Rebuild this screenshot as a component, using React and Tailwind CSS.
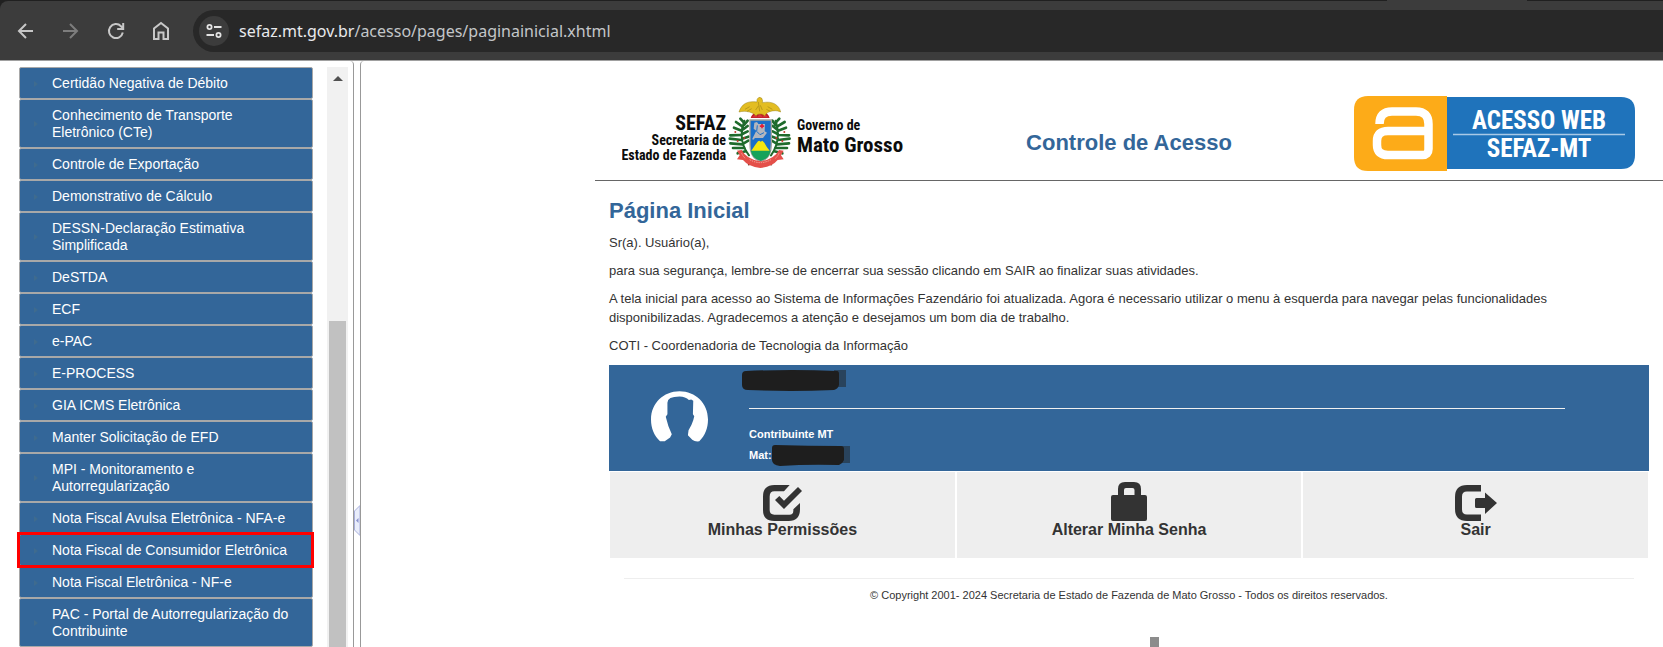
const MENU = [
  'Certidão Negativa de Débito',
  'Conhecimento de Transporte Eletrônico (CTe)',
  'Controle de Exportação',
  'Demonstrativo de Cálculo',
  'DESSN-Declaração Estimativa Simplificada',
  'DeSTDA',
  'ECF',
  'e-PAC',
  'E-PROCESS',
  'GIA ICMS Eletrônica',
  'Manter Solicitação de EFD',
  'MPI - Monitoramento e Autorregularização',
  'Nota Fiscal Avulsa Eletrônica - NFA-e',
  'Nota Fiscal de Consumidor Eletrônica',
  'Nota Fiscal Eletrônica - NF-e',
  'PAC - Portal de Autorregularização do Contribuinte',
]
const HIGHLIGHTED = 'Nota Fiscal de Consumidor Eletrônica'

function BrowserBar() {
  return (
    <header className="shrink-0 bg-[#202020]">
      <div className="flex h-px justify-end">
        <div className="mr-[136px] w-[140px] bg-[#3c3c3c]" />
      </div>
      <div className="flex h-[60px] items-center overflow-hidden rounded-tl-lg border-b border-[#a0a0a0] bg-[#3c3c3c] pl-4">
        <nav className="flex items-center gap-[25px] text-[#c7c7c7]">
          <button type="button" aria-label="Voltar">
            <svg className="size-5" viewBox="0 0 20 20" fill="none" stroke="currentColor" strokeWidth="2">
              <path d="M17 10H3.500M10 3L3 10l7 7" />
            </svg>
          </button>
          <button type="button" aria-label="Avançar" className="text-[#7d7d7d]">
            <svg className="size-5" viewBox="0 0 20 20" fill="none" stroke="currentColor" strokeWidth="2">
              <path d="M2 10h13.500M9 3l7 7-7 7" />
            </svg>
          </button>
          <button type="button" aria-label="Recarregar">
            <svg className="size-5" viewBox="0 0 20 20" fill="none" stroke="currentColor" strokeWidth="2">
              <path d="M16.800 11.500A7 7 0 1 1 15 5.200L17 7.200M17.200 2v6h-6" />
            </svg>
          </button>
          <button type="button" aria-label="Página inicial">
            <svg className="size-5" viewBox="0 0 20 20" fill="none" stroke="currentColor" strokeWidth="2">
              <path d="M3 18V7.500L10 2l7 5.500V18h-4.500v-6.500h-5V18z" />
            </svg>
          </button>
        </nav>
        <div className="ml-[22px] flex h-[42px] grow items-center rounded-l-full bg-[#282828] pl-[6px]">
          <button type="button" aria-label="Informações do site" className="grid size-[30px] place-items-center rounded-full bg-[#3c3c3c]">
            <svg className="size-4" viewBox="0 0 16 16" fill="none" stroke="#e3e3e3" strokeWidth="1.800">
              <circle cx="3.500" cy="4" r="2.100" />
              <circle cx="12.500" cy="12" r="2.100" />
              <path d="M8 4h7.500M.5 12H8" />
            </svg>
          </button>
          <p className="ml-[10px] font-['Noto_Sans',sans-serif] text-base leading-6 text-[#c3c6c8]">
            <span className="text-[#e8eaed]">sefaz.mt.gov.br</span>/acesso/pages/paginainicial.xhtml
          </p>
        </div>
      </div>
    </header>
  )
}

function Sidebar() {
  return (
    <aside className="flex w-[354px] shrink-0 justify-between overflow-hidden rounded-tr border-r border-[#999] pt-[6px] pr-[5px] pl-[19px]">
      <ul className="w-[294px]">
        {MENU.map((label) => (
          <li key={label} className="relative">
            <a
              href="#"
              className="flex items-center rounded-[2px] border border-[#a8a8a8] bg-[#336699] pt-[7px] pr-5 pb-[6px] pl-[14px] text-sm leading-[17px] text-white"
            >
              <span className="mr-[14px] h-0 w-0 shrink-0 border-y-[3px] border-l-4 border-y-transparent border-l-[#3f6b8f]" />
              {label}
            </a>
            {label === HIGHLIGHTED && (
              <span className="pointer-events-none absolute -inset-y-[2px] -right-px -left-[2px] z-10 border-[3px] border-[#ff0000]" />
            )}
          </li>
        ))}
      </ul>
      <div className="flex w-[21px] flex-col items-center bg-[#f1f1f1]">
        <span className="mt-[9px] h-0 w-0 shrink-0 border-x-[5px] border-b-[5px] border-x-transparent border-b-[#505050]" />
        <span className="mt-[240px] w-[17px] grow bg-[#c1c1c1]" />
      </div>
    </aside>
  )
}

function Splitter() {
  return (
    <div className="w-[6px] shrink-0 pt-[444px]">
      <button type="button" aria-label="Recolher menu" className="block">
        <svg className="h-[31px] w-[6px]" viewBox="0 0 6 31">
          <path d="M6 .5L.5 6v19L6 30.500z" fill="#e9edfb" stroke="#a9b0dc" />
          <path d="M4.500 13v5L2 15.500z" fill="#8b93cf" />
        </svg>
      </button>
    </div>
  )
}

function GovernmentLogo() {
  return (
    <svg className="h-[81px] w-[282px]" viewBox="622 90 282 81" role="img" aria-label="SEFAZ - Governo de Mato Grosso">
      <g className="font-['Roboto_Condensed',sans-serif] font-bold" fill="#0c0c0c">
        <text x="726" y="130" textAnchor="end" fontSize="20">SEFAZ</text>
        <text x="726" y="145" textAnchor="end" fontSize="14">Secretaria de</text>
        <text x="726" y="160" textAnchor="end" fontSize="14">Estado de Fazenda</text>
        <text x="797" y="130" fontSize="14">Governo de</text>
        <text x="797" y="152" fontSize="21">Mato Grosso</text>
      </g>
      <g transform="translate(725 90) scale(.3333)">
        <g fill="none" stroke="#1f6b2c" strokeWidth="8" strokeLinecap="round">
          <path d="M58 92C44 130 48 165 72 196M152 92c12 38 8 73-14 104" strokeWidth="6" />
          <path d="M57 98L46 86M53 110L33 96M50 122L27 113M48 135L16 136M49 150L14 146M52 163L16 160M57 174L24 174M62 184L38 190M58 104L68 92M54 118L68 108M52 132L68 124M52 146L70 140M56 160L70 152" />
          <path d="M152 98L163 86M156 110L179 96M159 122L183 113M161 135L192 136M160 150L194 146M157 163L192 160M152 174L186 174M148 184L172 190M151 104L142 92M156 118L143 108M158 132L143 124M158 146L142 140M154 160L140 152" />
        </g>
        <g fill="#c03a2c">
          <circle cx="31" cy="126" r="3" /><circle cx="38" cy="153" r="3" /><circle cx="58" cy="144" r="3" />
          <circle cx="178" cy="126" r="3" /><circle cx="172" cy="153" r="3" /><circle cx="154" cy="144" r="3" />
        </g>
        <path d="M77 84Q80 72 92 68l6-6 8 4 8-4 6 6q10 2 14 16z" fill="#c21f27" />
        <path d="M82 82l8-9 7 8 8-10 8 10 8-8 8 9z" fill="#e0454a" opacity=".6" />
        <path d="M42 66C50 42 66 32 96 36Q94 26 102 22q10 0 10 8 2 4 0 8c30-6 50 6 55 28-12-6-22-4-30-2-8 2-14 6-18 14-6-8-22-8-26 0-6-10-30-18-51-12z" fill="#e3bd22" stroke="#9a8114" strokeWidth="1.500" />
        <path d="M60 58l14-8M66 64l14-8M92 60l8-12M112 60l-6-14M128 50l14 8M124 58l12 6M100 36l4 28" stroke="#a48a18" strokeWidth="2" fill="none" />
        <path d="M75 90h64v72q0 44-32 52-32-8-32-52z" fill="#1b6fc9" stroke="#a8a69b" strokeWidth="4" />
        <path d="M77 181h60q-4 26-30 31-26-5-30-31z" fill="#16a25a" />
        <path d="M79 182q12-18 20-28l4-2 4 3 5-3 6 6q6 12 16 24z" fill="#f4e60e" />
        <path d="M88 98l8-2 4 6h20l-1 22 7 4-12 16H90l-6 6-2-4 12-24-8-6z" fill="#b3b6bd" />
        <path d="M97 106l-2 18 10 10 12-6" fill="none" stroke="#1b6fc9" strokeWidth="3" />
        <path d="M111 102v13M104.500 108.500h13" stroke="#e31d38" strokeWidth="5" />
        <path d="M56 204L78 222M70 226l9-12M140 226l-9-12" stroke="#6b2a1c" strokeWidth="5" />
        <path d="M36 182l14-2q14 28 56 34 42-6 56-34l14 2-8 14 8 12-18 2q-16 20-52 24-36-4-52-24l-18-2 8-12z" fill="#e4504a" />
        <path d="M74 209q32 18 64 0M50 190q4 10 12 16M162 190q-4 10-12 16" fill="none" stroke="#f6a9a0" strokeWidth="3" strokeDasharray="4 3" />
      </g>
    </svg>
  )
}

function AccessLogo() {
  return (
    <svg className="h-[75px] w-[281px]" viewBox="0 0 281 75" role="img" aria-label="Acesso Web SEFAZ-MT">
      <path d="M93 1h174q14 0 14 14v44q0 14-14 14H93z" fill="#1f73bb" />
      <path d="M14 0h79v75H14Q0 75 0 61V14Q0 0 14 0z" fill="#fdab18" />
      <path d="M25.500 28Q25.500 15.500 38 15.500h24q12.500 0 12.500 12.500v25q0 6-6 6H34q-11 0-11-10v-4q0-10 11-10h40" fill="none" stroke="#fff" strokeWidth="8.500" />
      <path d="M99 38.500h172" stroke="#a9c9e6" strokeWidth="1.500" />
      <g className="font-['Roboto_Condensed',sans-serif] font-bold" fill="#fff" textAnchor="middle" fontSize="25">
        <text x="185" y="33">ACESSO WEB</text>
        <text x="185" y="61">SEFAZ-MT</text>
      </g>
    </svg>
  )
}

function Avatar() {
  return (
    <svg className="h-[51px] w-[57px] shrink-0" viewBox="155 123 170 152" aria-hidden="true">
      <path
        d="M182 273C164 256 155 234 155 208C155 160 192 124 240 124s85 36 85 84c0 26-9 48-26 65Q286 275 278 268L265 255L267 240Q276 226 281 210L284 198L280 192L281 152L275 148L268 150Q258 139 240 139Q204 139 204 158V192L199 200L203 214Q206 228 212 240L217 252L212 262L196 273z"
        fill="#fff"
      />
    </svg>
  )
}

function CheckIcon() {
  return (
    <svg className="h-9 w-[39px]" viewBox="486 405 117 108" fill="currentColor" aria-hidden="true">
      <path d="M566 405H520Q486 405 486 440V480Q486 513 520 513H563Q597 513 597 478V459L577 478V482Q577 494 565 494H520Q506 494 506 480V440Q506 424 520 424H549Z" />
      <path d="M522 450L535 438L549 452L591 411L603 423L549 477Z" />
    </svg>
  )
}

function LockIcon() {
  return (
    <svg className="h-[39px] w-9" viewBox="0 0 36 39" fill="currentColor" aria-hidden="true">
      <path d="M7 13V7q0-7 7-7h9q7 0 7 7v6h4q2 0 2 2v22q0 2-2 2H2q-2 0-2-2V15q0-2 2-2zM13 13h10.500V8q0-2-2-2H15q-2 0-2 2z" fillRule="evenodd" />
    </svg>
  )
}

function ExitIcon() {
  return (
    <svg className="h-9 w-[42px]" viewBox="0 0 42 36" fill="currentColor" aria-hidden="true">
      <path d="M26 0H12Q0 0 0 12v12q0 12 12 12h14v-6.500H12q-5 0-5-5v-13q0-5 5-5h14z" />
      <path d="M21.500 13H30V7.500L42 18 30 29v-6h-8.500q-1.500 0-1.500-1.500v-7q0-1.500 1.500-1.500z" />
    </svg>
  )
}

const ACTIONS = [
  { label: 'Minhas Permissões', Icon: CheckIcon },
  { label: 'Alterar Minha Senha', Icon: LockIcon },
  { label: 'Sair', Icon: ExitIcon },
]

function UserPanel() {
  return (
    <section className="mt-[10px]">
      <div className="flex bg-[#336699] pr-[84px] pb-[5px] pl-[42px] text-[11px] leading-[21px] font-bold text-white">
        <div className="pt-[26px]">
          <Avatar />
        </div>
        <div className="ml-[41px] grow pt-[5px]">
          <svg className="-ml-[7px] block h-[21px] w-[104px]" viewBox="0 0 104 21" aria-hidden="true">
            <path d="M92 0h12v17H92z" fill="#29435c" />
            <path d="M4 1Q50-1 95 1q2 0 2 3v11q-1 4-5 5-44 2-86 0Q0 20 0 15V5q0-4 4-4z" fill="#1e1e1e" />
          </svg>
          <hr className="mt-[17px] mb-[15px] border-[#f0f0f0]" />
          <p>Contribuinte MT</p>
          <p className="flex items-center">
            Mat:
            <svg className="h-[21px] w-[78px]" viewBox="0 0 78 21" aria-hidden="true">
              <path d="M66 1h12v17H66z" fill="#29435c" />
              <path d="M3 0q34 1 66 1 3 0 3 3v11q-1 3-5 5-31-1-59 1Q0 20 0 15V3q0-3 3-3z" fill="#1e1e1e" />
            </svg>
          </p>
        </div>
      </div>
      <div className="mx-px mt-px grid grid-cols-3 gap-[2px]">
        {ACTIONS.map(({ label, Icon }) => (
          <a key={label} href="#" className="flex flex-col items-center bg-[#eeeeee] pb-[19px] text-base leading-[18px] font-bold text-[#333]">
            <span className="flex h-[49px] items-end">
              <Icon />
            </span>
            {label}
          </a>
        ))}
      </div>
    </section>
  )
}

export default function App() {
  return (
    <div className="flex h-screen flex-col overflow-hidden bg-white font-['Liberation_Sans',Arial,sans-serif]">
      <BrowserBar />
      <div className="flex min-h-0 grow">
        <Sidebar />
        <Splitter />
        <main className="min-w-0 grow overflow-hidden rounded-tl border-l border-[#999] pl-[234px]">
          <div className="flex items-end justify-between border-b border-[#666] pt-[29px] pr-[28px] pb-[9px] pl-[27px]">
            <GovernmentLogo />
            <h1 className="text-[22px] leading-14 font-bold text-[#336699]">Controle de Acesso</h1>
            <AccessLogo />
          </div>
          <div className="pt-[14px] pr-[14px] pl-[14px]">
            <h2 className="mb-[6px] text-[22px] leading-8 font-bold text-[#336699]">Página Inicial</h2>
            <div className="flex flex-col gap-[9px] pr-8 text-[13px] leading-[19px] text-[#333]">
              <p>Sr(a). Usuário(a),</p>
              <p>para sua segurança, lembre-se de encerrar sua sessão clicando em SAIR ao finalizar suas atividades.</p>
              <p>
                A tela inicial para acesso ao Sistema de Informações Fazendário foi atualizada. Agora é necessario utilizar o
                menu à esquerda para navegar pelas funcionalidades disponibilizadas. Agradecemos a atenção e desejamos um bom
                dia de trabalho.
              </p>
              <p>COTI - Coordenadoria de Tecnologia da Informação</p>
            </div>
            <UserPanel />
            <footer className="mt-5 text-center text-[11px] leading-4 text-[#333]">
              <hr className="mx-[15px] mb-2 border-[#eeeeee]" />
              <p>© Copyright 2001- 2024 Secretaria de Estado de Fazenda de Mato Grosso - Todos os direitos reservados.</p>
              <div className="mt-[34px] ml-[52%] h-8 w-[9px] bg-[#8c8c8c]" />
            </footer>
          </div>
        </main>
      </div>
    </div>
  )
}
